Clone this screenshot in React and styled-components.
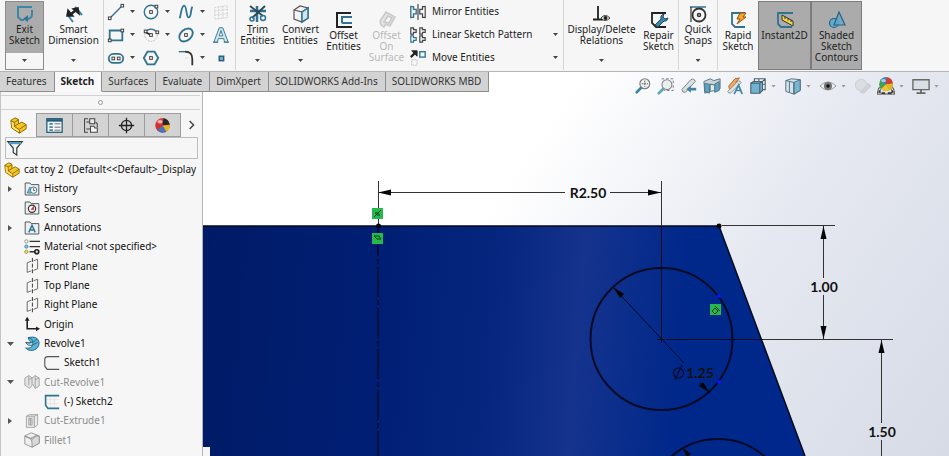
import React from 'react';
import styled, { createGlobalStyle, css } from 'styled-components';

const GlobalStyle = createGlobalStyle`
  * {
    box-sizing: border-box;
  }
  body {
    margin: 0;
    overflow: hidden;
  }
  button, input {
    font: inherit;
    color: inherit;
    border: 0;
    padding: 0;
    margin: 0;
    background: none;
  }
`;

const Page = styled.div`
  height: 100vh;
  display: flex;
  flex-direction: column;
  font-family: 'Noto Sans', sans-serif;
  font-size: 10px;
  line-height: 11px;
  color: #222222;
  background: #ffffff;
  overflow: hidden;
`;

const Ribbon = styled.header`
  display: flex;
  flex: none;
  height: 72px;
  padding: 0 5px 1px;
  background: #f6f6f6;
  border-bottom: 1px solid #b4b4b4;
`;

const Divider = styled.span`
  flex: none;
  width: 1px;
  background: #d6d6d6;
`;

const Command = styled.button`
  flex: none;
  display: flex;
  flex-direction: column;
  align-items: center;
  width: ${({ $width }) => $width}px;
  margin-top: 1px;
  padding: ${({ $low }) => ($low ? 9 : 3)}px 0 8px;
  white-space: nowrap;
  color: ${({ disabled }) => (disabled ? '#b9b9b9' : '#222222')};

  ${({ $pressed }) => $pressed && css`
    background: #ababab;
    border: 1px solid #7c7c7c;
    padding-top: 8px;
  `}

  ${({ $split }) => $split && css`
    background: linear-gradient(#ababab 51px, #f6f6f6 51px);
    border: 1px solid #8c8c8c;
    padding: 2px 0 7px;
  `}
`;

const CommandLabel = styled.span`
  text-align: center;
  white-space: pre-line;
`;

const Svg = styled.svg`
  flex: none;
  display: block;
  width: ${({ $size }) => $size || 20}px;
  height: ${({ $size }) => $size || 20}px;
  fill: none;
  stroke: #2f7391;
  stroke-width: 1.5;
`;

const Caret = styled.span`
  flex: none;
  width: 5px;
  height: 3px;
  background: ${({ $color }) => $color || '#444444'};
  clip-path: polygon(0 0, 100% 0, 50% 100%);
`;

const CommandCaret = styled(Caret)`
  margin-top: auto;
`;

const SketchTools = styled.div`
  flex: none;
  display: grid;
  grid-template-columns: repeat(3, 35px) 23px;
  grid-auto-rows: 23px;
  padding-left: 3px;
`;

const SmallTool = styled.button`
  display: flex;
  align-items: center;
  gap: 5px;
`;

const CommandList = styled.div`
  flex: none;
  display: grid;
  grid-auto-rows: 23px;
  width: 155px;
  padding: 0 5px 0 1px;
`;

const ListCommand = styled.button`
  display: flex;
  align-items: center;
  gap: 5px;
  text-align: left;
  white-space: nowrap;
`;

const ListLabel = styled.span`
  flex: 1;
`;

const TabRow = styled.div`
  position: relative;
  z-index: 1;
  flex: none;
  display: flex;
  height: 20px;
`;

const Tab = styled.button`
  height: 20px;
  padding: 0 7px 0 6px;
  white-space: nowrap;
  color: ${({ $active }) => ($active ? '#222222' : '#333333')};
  font-weight: ${({ $active }) => ($active ? 700 : 400)};
  background: ${({ $active }) => ($active ? '#f8f8f8' : '#d3d3d3')};
  border-right: 1px solid #8e8e8e;
  border-bottom: 1px solid ${({ $active }) => ($active ? '#f8f8f8' : '#8e8e8e')};
`;

const ViewTools = styled.div`
  position: absolute;
  top: 5px;
  right: 7px;
  display: flex;
  gap: 5px;
`;

const ViewTool = styled.button`
  display: flex;
  align-items: center;
  gap: 4px;
  width: ${({ $menu }) => ($menu ? 30 : 18)}px;
  opacity: ${({ disabled }) => (disabled ? 0.35 : 1)};
`;

const Workspace = styled.main`
  flex: 1;
  min-height: 0;
  display: flex;
  margin-top: -20px;
  background: linear-gradient(125deg, #ffffff 48%, #e6e9f1 72%, #d6dbe6 100%);
`;

const Panel = styled.aside`
  flex: none;
  width: 203px;
  margin-top: 20px;
  background: #f6f6f6;
  border-left: 1px solid #c4c4c4;
  border-right: 1px solid #b4b4b4;
  overflow: hidden;
`;

const Splitter = styled.div`
  display: flex;
  align-items: center;
  justify-content: center;
  height: 15px;
  margin: 3px 2px 3px 0;
  border: solid #d2d2d2;
  border-width: 1px 0;
`;

const SplitterDot = styled.span`
  width: 5px;
  height: 5px;
  border: 1px solid #999999;
  border-radius: 50%;
`;

const PanelTabs = styled.div`
  display: flex;
  height: 24px;
`;

const PanelTab = styled.button`
  display: flex;
  align-items: center;
  justify-content: center;
  width: 36px;
  background: ${({ $active }) => ($active ? '#f6f6f6' : '#d3d3d3')};
  border: solid #9c9c9c;
  border-width: ${({ $active }) => ($active ? '0 1px 0 0' : '1px 1px 1px 0')};
`;

const MoreTabs = styled.button`
  flex: 1;
  display: flex;
  align-items: center;
  justify-content: center;
`;

const Filter = styled.label`
  display: flex;
  align-items: center;
  height: 22px;
  margin: 0 4px;
  border: 1px solid #bdbdbd;
`;

const FilterInput = styled.input`
  flex: 1;
  min-width: 0;
  outline: none;
`;

const Tree = styled.ul`
  display: grid;
  grid-auto-rows: 19px 19px 20px;
  margin: 0;
  padding: 1px 0 0 2px;
  list-style: none;
`;

const TreeRow = styled.li`
  display: flex;
  align-items: center;
  gap: 4px;
  padding-left: ${({ $level }) => [1, 3, 41][$level]}px;
  white-space: pre;
  color: ${({ $muted }) => ($muted ? '#8d8d8d' : '#111111')};
`;

const Toggle = styled.button`
  flex: none;
  display: flex;
  width: 14px;

  svg {
    width: 8px;
    height: 8px;
  }
`;

const ToggleSpace = styled.span`
  flex: none;
  width: 14px;
`;

const Viewport = styled.section`
  flex: 1;
  min-width: 0;
  overflow: hidden;
`;

const Drawing = styled.svg`
  display: block;
  width: 100%;
  height: 100%;
`;

const DimensionText = styled.text`
  font-family: Lato, sans-serif;
  font-size: 14px;
  font-weight: 700;
  fill: #111111;
  text-anchor: middle;
`;

/* small square handle used on the sketch entity icons */
const Handle = ({ x, y }) => (
  <rect x={x - 1.5} y={y - 1.5} width="3" height="3" fill="#f6f6f6" stroke="#333" strokeWidth="1" />
);

const PartShape = () => (
  <g stroke="#7d5c00" strokeWidth="1" strokeLinejoin="round">
    <path d="M1 4l5-3 4 2v5l4-2 5 3v5l-8 5-9-6z" fill="#f3c51d" />
    <path d="M1 4l4 2.500L10 3M5 6.500V11l6 4v4M5 11l5-3M11 14.500L19 9" />
    <path d="M2 5.500l2.500 1.500v4.500l6 4v2L2.500 12.500z" fill="#ffe070" stroke="none" />
  </g>
);

/* slices run clockwise from the left */
const BallShape = ({ colors }) => (
  <g stroke="none">
    <circle cx="10" cy="10" r="8.500" fill={colors[0]} />
    <path d="M10 10L3 5q3-4 8-3.500z" fill={colors[1]} />
    <path d="M10 10l1-8.500Q17 2 18.500 9z" fill={colors[2]} />
    <path d="M10 10l8.500-1q0 6-4 8.500z" fill={colors[3]} />
    <path d="M10 10l4.500 7.500Q8 20 4 16z" fill={colors[4]} />
    <ellipse cx="7" cy="5.500" rx="3" ry="2" fill="#fff" opacity="0.6" />
  </g>
);

const FolderShape = () => (
  <path d="M1.500 17.500v-15h6l1.500 2h9.500v13z" fill="#eceff1" stroke="#555" strokeWidth="1.200" />
);

const PlaneShape = () => (
  <g stroke="#666" strokeWidth="1.200">
    <path d="M9 4L4 6v12l5-2M12 3.500l5-2v12l-5 2" />
    <path d="M10.500 0v20" stroke="#333" strokeDasharray="5 2" />
  </g>
);

const icons = {
  exit: (
    <>
      <path d="M17 3H3v10l3 3h3" stroke="#3b87ac" strokeWidth="2" />
      <path d="M17 6v4q0 5-6 5" stroke="#3b87ac" strokeWidth="2" />
      <path d="M8 15l5-4v7z" fill="#2f7391" stroke="none" />
    </>
  ),
  smartDimension: (
    <>
      <path d="M3 10l6 8M11 3l7 8" stroke="#3b87ac" strokeWidth="2" />
      <path d="M6 11l6-5" stroke="#222" strokeWidth="2.500" />
      <path d="M3 12l1-6 5 6zM14 4l1 6-6-5z" fill="#222" stroke="#222" />
    </>
  ),
  line: (<><path d="M4 16L16 4" /><Handle x={3} y={17} /><Handle x={17} y={3} /></>),
  circle: (<><circle cx="10" cy="10" r="7.500" /><Handle x={10} y={10} /><Handle x={16} y={4} /></>),
  spline: <path d="M3 17C5 10 5 3 8 3s2 13 5 13 2-8 4-12" strokeWidth="2" />,
  grid: (
    <path d="M3 5l14-2v13L3 18zM7.500 4v14M12 4v13M3 9l14-2M3 13.500L17 12" stroke="#cfcfcf" strokeWidth="1" strokeDasharray="2 1" />
  ),
  rectangle: (<><path d="M3 5h14v11H3z" strokeWidth="2" /><Handle x={3} y={16} /><Handle x={17} y={5} /></>),
  arc: (
    <>
      <circle cx="10" cy="10" r="7" stroke="#bbb" strokeWidth="1" strokeDasharray="2 1" />
      <path d="M3 7q7-7 14 0" /><path d="M4 7l6 3" stroke="#222" strokeWidth="2" />
      <Handle x={4} y={6} /><Handle x={10} y={10} /><Handle x={17} y={7} />
    </>
  ),
  ellipse: (<><ellipse cx="10" cy="10" rx="8.500" ry="6" transform="rotate(-42 10 10)" strokeWidth="2" /><Handle x={10} y={10} /></>),
  letter: <path d="M2 18l6-16h4l6 16h-4l-1-4H7l-1 4zM8 11h4l-2-6zM1 18h6M13 18h6" strokeWidth="1" fill="#d3e3eb" fillRule="evenodd" />,
  slot: (<><rect x="2" y="5.500" width="16" height="10" rx="5" strokeWidth="2" /><Handle x={7} y={10.500} /><Handle x={13} y={10.500} /></>),
  polygon: (<><path d="M6 3h8l4 7-4 7H6l-4-7z" strokeWidth="2" /><Handle x={10} y={10} /></>),
  fillet: (<><path d="M2 3h9" /><path d="M9 3q8 0 8 8v7" stroke="#333" strokeWidth="2" /><path d="M9 10h3" stroke="#ddd" /></>),
  point: <rect x="8" y="8" width="5" height="5" fill="#6aaed0" stroke="#245c77" />,
  trim: (
    <>
      <path d="M2 7h16M9 2v16" strokeWidth="2.500" />
      <path d="M2 2l13 10M17 2L4 14" stroke="#2d4650" strokeWidth="1.800" />
      <circle cx="4" cy="15" r="2" /><circle cx="15" cy="14" r="2.500" />
    </>
  ),
  convert: (
    <g stroke="#555" strokeWidth="1.200">
      <path d="M3 6l6-4 8 2v10l-6 4-8-3z" fill="#f4f4f4" />
      <path d="M3 6l8 2v10M11 8l6-4" /><path d="M11 8l6-4v10l-6 4z" fill="#d2e4ee" stroke="#2f7391" strokeWidth="1.500" />
    </g>
  ),
  offset: (<><path d="M17 3H3v14h15" stroke="#222" strokeWidth="2" /><path d="M18 7H8v5q0 1 2 1h8" strokeWidth="2" /></>),
  offsetSurface: (
    <g stroke="#c9c9c9">
      <path d="M3 11L9 2l9 5-5 9-4-2-2 3-3-2z" fill="#e3e3e3" />
      <path d="M7 12l4-6 4 2-3 5z" fill="#f5f5f5" />
    </g>
  ),
  mirror: (
    <>
      <path d="M2 3v14M2 4h3v3h3v5H5v4H2" />
      <path d="M18 3v14M18 4h-3v3h-3v5h3v4h3M10 1v18" stroke="#444" strokeWidth="1.300" />
    </>
  ),
  pattern: (
    <g strokeWidth="1.300">
      <path d="M2 2h3v2h3v3H5v2H2z" stroke="#444" /><path d="M12 2h3v2h3v3h-3v2h-3z" stroke="#444" />
      <path d="M2 11h3v2h3v3H5v2H2z" /><path d="M12 11h3v2h3v3h-3v2h-3z" stroke="#444" />
    </g>
  ),
  move: (
    <>
      <path d="M2 9l6-6" stroke="#222" strokeWidth="2.500" /><path d="M3 2h6v6z" fill="#222" stroke="#222" strokeWidth="1" />
      <rect x="12" y="3" width="6" height="6" /><rect x="3" y="12" width="6" height="6" stroke="#bbb" strokeWidth="1" strokeDasharray="2 1" />
    </>
  ),
  relations: (
    <>
      <path d="M6 2v13M1 15.500h10" stroke="#222" strokeWidth="1.800" />
      <path d="M9 14q4-5 9 0-5 5-9 0z" fill="#fff" stroke="#333" strokeWidth="1" />
      <circle cx="13.500" cy="14" r="2" fill="#222" stroke="none" />
    </>
  ),
  repair: (
    <>
      <path d="M17 3H3v10l4 4h10" stroke="#222" strokeWidth="1.800" />
      <path d="M6 15l6-6q-1-4 3-5l-1 3 2 2 3-1q-1 4-4 3l-6 6z" fill="#3b87ac" stroke="#1f4e65" strokeWidth="1" />
    </>
  ),
  snaps: (
    <g stroke="#333">
      <path d="M2 3h16" stroke="#2f7391" /><path d="M3 3v15" strokeWidth="1.200" />
      <circle cx="11" cy="11" r="6.500" strokeWidth="1.800" /><circle cx="11" cy="11" r="1.500" />
    </g>
  ),
  rapid: (
    <>
      <path d="M17 3H4v11l3 3h10" strokeWidth="1.800" />
      <path d="M12 3h6l-3 4h3l-9 7 3-5H9z" fill="#f5a623" stroke="#9c4b09" strokeWidth="1" />
    </>
  ),
  instant: (
    <>
      <path d="M18 3H3v11l3 3h11" strokeWidth="1.800" />
      <path d="M7 5l11 6v5L7 10z" fill="#f1d34a" stroke="#333" strokeWidth="1" /><path d="M10 7v2M13 8.500v2M16 10v2" stroke="#333" strokeWidth="1" />
    </>
  ),
  contours: (
    <g fill="#62a9d0" stroke="#28617f" strokeWidth="1.200">
      <circle cx="7" cy="13" r="4.500" /><path d="M12 2l6 13H7z" fillOpacity="0.8" />
    </g>
  ),
  zoomFit: (
    <>
      <path d="M3 17l5-5" stroke="#3989a5" strokeWidth="3" strokeLinecap="round" />
      <circle cx="12" cy="7.500" r="5.500" fill="#eef1f3" stroke="#777" strokeWidth="1.200" />
      <path d="M12 4v7M8.500 7.500h7" stroke="#555" strokeWidth="1" strokeDasharray="2 1" />
    </>
  ),
  zoomArea: (
    <>
      <path d="M5 2h13v13H8" stroke="#777" strokeWidth="1" strokeDasharray="3 2" />
      <path d="M2 18l5-5" stroke="#60a5ba" strokeWidth="3" strokeLinecap="round" />
      <circle cx="11" cy="8.500" r="5.500" fill="#e9eef1" stroke="#888" strokeWidth="1.200" />
    </>
  ),
  previousView: (
    <>
      <path d="M2 14L12 3q4-2 5 2L6 17q-3 1-4-3z" fill="#dadfe2" stroke="#777" strokeWidth="1" />
      <path d="M18 13.500h-7" stroke="#3f86a5" strokeWidth="3" /><path d="M7 13.500l5-4v8z" fill="#3f86a5" stroke="none" />
    </>
  ),
  section: (
    <g strokeWidth="1" stroke="#4b7385">
      <path d="M1 5l7-3 4 2 7-2v11l-6 3V9l-5-1v8l-6 2z" fill="#ccd3d6" />
      <path d="M2 7l5 1v10l-5-2zM13 8l5-3v10l-5 2z" fill="#5fa4c2" /><path d="M8 8l5 1v6l-5 1z" fill="#e6eaec" />
    </g>
  ),
  dynamic: (
    <g strokeWidth="1">
      <path d="M3 10l7-8 5-1-4 5 4 1L4 14z" fill="#f2a65a" stroke="#a5672b" />
      <path d="M2 16L14 4l3 2L5 18q-3 0-3-2z" fill="#dfe4e7" stroke="#888" />
      <path d="M9 19l5-10 4 10M11 15h6" stroke="#3f86a5" strokeWidth="1.800" />
    </g>
  ),
  orientation: (
    <g strokeWidth="1.200" stroke="#46626e">
      <path d="M6 5V2h12v12h-3M18 2l-4 4M18 8h-4M11 2v4" />
      <path d="M2 7l3-2h10v10l-3 3H2z" fill="#72b1cf" /><path d="M2 7h10v11M12 7l3-2" />
    </g>
  ),
  display: (
    <g strokeWidth="1" stroke="#4b6b7a">
      <path d="M2 4l6-2 10 1v12l-7 4-9-3z" fill="#d5e4ea" /><path d="M11 6l7-3v12l-7 4z" fill="#78b7d3" /><path d="M2 4l9 2v13M6 5v12" />
    </g>
  ),
  eye: (
    <>
      <path d="M1 10q9-9 18 0-9 9-18 0z" fill="#eee" stroke="#999" strokeWidth="1" />
      <circle cx="10" cy="10" r="4.500" fill="#777" stroke="none" /><circle cx="10" cy="10" r="2" fill="#111" stroke="none" />
    </>
  ),
  appearance: (
    <g stroke="#999" strokeWidth="1"><circle cx="8" cy="9" r="6.500" fill="#c8c8c8" /><path d="M7 17l9-10 3 3-8 8z" fill="#aaa" /></g>
  ),
  scene: (
    <>
      <path d="M2 12h16l2 7H0z" fill="#e4e4e4" stroke="#444" strokeWidth="1" />
      <path d="M1 17l3-4v5zM19 17l-3-4v5zM5 17h4v2H5zM12 17h4v2h-4z" fill="#333" stroke="none" />
      <g transform="translate(1 -1) scale(0.9)">
        <BallShape colors={['#3da552', '#3d79c9', '#d93a32', '#e8b51d', '#f0c533']} />
      </g>
    </>
  ),
  monitor: (
    <g stroke="#686868"><path d="M1 3h18v11H1z" fill="#d9dfe4" /><path d="M10 14v3M5 18h10" strokeWidth="2" /></g>
  ),
  part: <PartShape />,
  properties: (
    <g stroke="#245c77">
      <rect x="1" y="2" width="18" height="16" fill="#f3f6f7" /><path d="M1 4h18" strokeWidth="3" />
      <path d="M4 8h4M4 12h4M4 15.500h4" strokeWidth="2" stroke="#3b87ac" /><path d="M10 8h7M10 12h7M10 15.500h7" stroke="#555" strokeWidth="1" />
    </g>
  ),
  configuration: (
    <g stroke="#444" strokeWidth="1.200">
      <path d="M7 2H3v16h4M5 6h5M5 14h6" /><path d="M9 2h6v6H9z" fill="#e7e7e7" />
      <path d="M10 11h4l1 2h3v5h-8z" fill="#f5f5f5" /><path d="M16 6l2 2v4" />
    </g>
  ),
  target: (<g stroke="#222"><circle cx="10" cy="10" r="6" /><path d="M10 1v18M1 10h18" /></g>),
  ball: <BallShape colors={['#d3302f', '#d8423a', '#26282e', '#e8b51d', '#4275c2']} />,
  more: <path d="M7 5l5 5-5 5" stroke="#444" strokeWidth="1.800" />,
  funnel: (
    <>
      <path d="M2 3h16l-6 7v8l-4-3v-5z" fill="#edf4f7" stroke="#333" strokeWidth="1.300" />
      <path d="M3 4.500h14" stroke="#4f9dbd" strokeWidth="2.500" />
    </>
  ),
  history: (<><FolderShape /><path d="M4 15l3-7 4 2-2 5z" fill="#7fb9d3" strokeWidth="1" /><circle cx="12" cy="11.500" r="4" fill="#fff" strokeWidth="1.200" /><path d="M12 9v3h2" stroke="#333" strokeWidth="1" /></>),
  sensors: (<><FolderShape /><circle cx="10" cy="11" r="4.500" fill="#fff" stroke="#333" /><path d="M9 12l3-4v4z" fill="#d33" stroke="#b33" strokeWidth="1" /></>),
  annotations: (<><FolderShape /><path d="M6 15.500l4-9 4 9M7.500 12.500h5" strokeWidth="1.800" /></>),
  material: (
    <>
      <path d="M7 3h13M7 9.500h13M7 16h8" stroke="#333" strokeWidth="1.800" />
      <g strokeWidth="1"><circle cx="3" cy="3" r="2" fill="#fff" stroke="#777" /><circle cx="3" cy="9.500" r="2" fill="#8ac5ee" /><circle cx="3" cy="16" r="2" fill="#f6ea55" stroke="#888022" /></g>
      <circle cx="16" cy="16" r="2.500" fill="#ddd" stroke="#222" strokeWidth="2" />
    </>
  ),
  plane: <PlaneShape />,
  origin: (<g stroke="#222"><path d="M4 3v13h13" strokeWidth="2" /><path d="M1 6l3-5 3 5zM15 13l5 3-5 3z" fill="#222" stroke="none" /></g>),
  revolve: (
    <g stroke="#1f5873" strokeWidth="1">
      <path d="M5 2q12-3 14 6 0 8-8 10-6 1-9-3 7 1 9-4-6 2-8-3 4 1 6 0-3-2-4-6z" fill="#55b3d9" />
      <path d="M5 2q6 1 6 6l5-4M11 11l6-3" /><path d="M2 8q4 2 9 0v3q-6 2-9-3z" fill="#d4eef8" />
    </g>
  ),
  sketch: <path d="M19 2H5Q1 2 1 5v9l3 4h15" stroke="#555" strokeWidth="1.400" />,
  sketchOpen: (<><path d="M8 4v12M13 4v12M4 7h14M4 12h14" stroke="#e2e2e2" strokeWidth="1" /><path d="M19 2H2v12l3 4h14" strokeWidth="2" /></>),
  cutRevolve: (
    <g stroke="#999" strokeWidth="1"><path d="M1 5l5-3 4 3 4-3 5 3v10l-5 3-3-5-4 5-6-4z" fill="#e2e2e2" /><path d="M6 2v12M10 5v8M14 2v16M6 7l4-2M14 7l5-2" /></g>
  ),
  cutExtrude: (
    <g stroke="#999" strokeWidth="1"><path d="M3 4l4-2h10v13l-4 3H3z" fill="#ececec" /><path d="M3 4h10v14M13 4l4-2M6 7h4v8H6zM8 7v8" fill="#ddd" /></g>
  ),
  filletFeature: (
    <g stroke="#888" strokeWidth="1"><path d="M1 5l8-4 10 4v9l-9 5-9-4z" fill="#eee" /><path d="M1 5l6 3q3 1 3 5v6l9-5V5q-6-1-8 4z" fill="#d9d9d9" /><path d="M8 8l9-4" /></g>
  ),
};

const Icon = ({ name, size }) => (
  <Svg viewBox="0 0 20 20" $size={size} aria-hidden="true">{icons[name]}</Svg>
);

const CommandButton = ({ icon, label, menu, ...rest }) => (
  <Command {...rest}>
    <Icon name={icon} />
    <CommandLabel>{label}</CommandLabel>
    {menu && <CommandCaret />}
  </Command>
);

const sketchTools = [
  ['line', true], ['circle', true], ['spline', true], ['grid', false],
  ['rectangle', true], ['arc', true], ['ellipse', true], ['letter', false],
  ['slot', true], ['polygon', false], ['fillet', true], ['point', false],
];

const listCommands = [
  { icon: 'mirror', label: 'Mirror Entities' },
  { icon: 'pattern', label: 'Linear Sketch Pattern', menu: true },
  { icon: 'move', label: 'Move Entities', menu: true },
];

const tabs = ['Features', 'Sketch', 'Surfaces', 'Evaluate', 'DimXpert', 'SOLIDWORKS Add-Ins', 'SOLIDWORKS MBD'];

const viewTools = [
  { icon: 'zoomFit' },
  { icon: 'zoomArea' },
  { icon: 'previousView' },
  { icon: 'section' },
  { icon: 'dynamic' },
  { icon: 'orientation', menu: true },
  { icon: 'display', menu: true },
  { icon: 'eye', menu: true },
  { icon: 'appearance', disabled: true },
  { icon: 'scene', menu: true },
  { icon: 'monitor', menu: true },
];

const panelTabs = ['part', 'properties', 'configuration', 'target', 'ball'];

const treeItems = [
  { icon: 'part', label: 'cat toy 2  (Default<<Default>_Display', level: 0 },
  { icon: 'history', label: 'History', level: 1, toggle: 'closed' },
  { icon: 'sensors', label: 'Sensors', level: 1 },
  { icon: 'annotations', label: 'Annotations', level: 1, toggle: 'closed' },
  { icon: 'material', label: 'Material <not specified>', level: 1 },
  { icon: 'plane', label: 'Front Plane', level: 1 },
  { icon: 'plane', label: 'Top Plane', level: 1 },
  { icon: 'plane', label: 'Right Plane', level: 1 },
  { icon: 'origin', label: 'Origin', level: 1 },
  { icon: 'revolve', label: 'Revolve1', level: 1, toggle: 'open' },
  { icon: 'sketch', label: 'Sketch1', level: 2 },
  { icon: 'cutRevolve', label: 'Cut-Revolve1', level: 1, toggle: 'open', muted: true },
  { icon: 'sketchOpen', label: '(-) Sketch2', level: 2 },
  { icon: 'cutExtrude', label: 'Cut-Extrude1', level: 1, toggle: 'closed', muted: true },
  { icon: 'filletFeature', label: 'Fillet1', level: 1, muted: true },
];

const TreeItem = ({ icon, label, level, toggle, muted }) => (
  <TreeRow $level={level} $muted={muted}>
    {level === 1 && (toggle ? (
      <Toggle aria-label={`Toggle ${label}`}>
        <svg viewBox="0 0 8 8" fill="#555">
          <path d={toggle === 'open' ? 'M1 2h7L4.500 6z' : 'M2 1v6l4-3z'} />
        </svg>
      </Toggle>
    ) : <ToggleSpace />)}
    <Icon name={icon} size={16} />
    <span>{label}</span>
  </TreeRow>
);

const Relation = ({ x, y, children }) => (
  <g transform={`translate(${x} ${y})`} stroke="#0b3d17" fill="none">
    <rect width="11" height="11" fill="#25b84c" stroke="none" />
    {children}
  </g>
);

const ModelView = () => (
  <Drawing viewBox="203 72 746 384" preserveAspectRatio="xMinYMin slice">
    <defs>
      <linearGradient id="face" gradientUnits="userSpaceOnUse" x1="203" y1="240" x2="805" y2="290">
        <stop offset="0" stopColor="#001b66" />
        <stop offset="0.3" stopColor="#001e74" />
        <stop offset="0.5" stopColor="#06267f" />
        <stop offset="0.63" stopColor="#15338d" />
        <stop offset="0.8" stopColor="#00288a" />
        <stop offset="1" stopColor="#00288c" />
      </linearGradient>
    </defs>
    <path d="M203 226H719L805 456H210V447H203z" fill="url(#face)" />
    <path d="M203 447h7v9h-7z" fill="#f6f6f6" />
    <path d="M203 226H719L805 456" fill="none" stroke="#050a1e" strokeWidth="1.500" />
    <path d="M378 226V456" stroke="#030a2c" strokeWidth="1.500" strokeDasharray="30 3 5 3" />
    <g fill="none" stroke="#030a24" strokeWidth="2">
      <circle cx="661.500" cy="339" r="71" />
      <circle cx="718" cy="510" r="71" />
    </g>
    <g stroke="#333333" strokeWidth="1">
      <path d="M378.500 181V226M661.500 181V226M378 192.500H565M610 192.500H661" />
      <path d="M722 225.500H835M823.500 226V278M823.500 295V339" />
      <path d="M763 339.500H893M881.500 340V423M881.500 440V456" />
    </g>
    <g stroke="#030a24" strokeWidth="1">
      <path d="M661.500 226V336M666 339.500H763M657 339.500h8M661.500 335v8" />
      <path d="M613 287L684 363M700 383L709 392" />
    </g>
    <g fill="#050505">
      <path d="M378 192.500l13-3v6zM661 192.500l-13-3v6z" />
      <path d="M823.500 226l-3 13h6zM823.500 339l-3-13h6zM881.500 340l-3 13h6z" />
      <path d="M613 287l11 7-4 4zM710 393l-11-7 4-4zM682 447l9 7-4 3z" />
      <circle cx="378.500" cy="226" r="2.500" />
      <circle cx="719" cy="226" r="2.500" />
    </g>
    <g fill="#0a12ff">
      <circle cx="719" cy="296" r="2" />
      <circle cx="719" cy="382" r="2" />
    </g>
    <Relation x={372} y={208}><path d="M2 9l7-7M3 5h4M5 7h3" /></Relation>
    <Relation x={372} y={233}><path d="M2 3h5l2 3H5z" /></Relation>
    <Relation x={710} y={304}><path d="M2 7l3-3 3 3-3 3zM5 2l5 5" /></Relation>
    <DimensionText x="588" y="198">R2.50</DimensionText>
    <DimensionText x="824" y="292">1.00</DimensionText>
    <DimensionText x="882" y="437">1.50</DimensionText>
    <DimensionText x="700" y="378">1.25</DimensionText>
    <g fill="none" stroke="#050b20" strokeWidth="1.200">
      <circle cx="678.500" cy="373" r="5" />
      <path d="M675 380l7-15" />
    </g>
  </Drawing>
);

const App = () => (
  <Page>
    <GlobalStyle />
    <Ribbon>
      <CommandButton icon="exit" label={'Exit\nSketch'} $width={39} $split menu />
      <CommandButton icon="smartDimension" label={'Smart\nDimension'} $width={59} menu />
      <Divider />
      <SketchTools>
        {sketchTools.map(([name, menu]) => (
          <SmallTool key={name} aria-label={name}>
            <Icon name={name} size={18} />
            {menu && <Caret />}
          </SmallTool>
        ))}
      </SketchTools>
      <Divider />
      <CommandButton icon="trim" label={<><u>T</u>rim{'\n'}Entities</>} $width={43} menu />
      <CommandButton icon="convert" label={'Convert\nEntities'} $width={43} menu />
      <CommandButton icon="offset" label={'Offset\nEntities'} $width={43} $low />
      <CommandButton icon="offsetSurface" label={'Offset\nOn\nSurface'} $width={43} $low disabled />
      <CommandList>
        {listCommands.map(({ icon, label, menu }) => (
          <ListCommand key={icon}>
            <Icon name={icon} size={18} />
            <ListLabel>{label}</ListLabel>
            {menu && <Caret />}
          </ListCommand>
        ))}
      </CommandList>
      <Divider />
      <CommandButton icon="relations" label={'Display/Delete\nRelations'} $width={75} menu />
      <CommandButton icon="repair" label={'Repair\nSketch'} $width={39} $low />
      <Divider />
      <CommandButton icon="snaps" label={'Quick\nSnaps'} $width={38} menu />
      <Divider />
      <CommandButton icon="rapid" label={'Rapid\nSketch'} $width={40} $low />
      <CommandButton icon="instant" label="Instant2D" $width={53} $pressed aria-pressed="true" />
      <CommandButton icon="contours" label={'Shaded\nSketch\nContours'} $width={51} $pressed aria-pressed="true" />
    </Ribbon>

    <TabRow>
      {tabs.map((tab) => (
        <Tab key={tab} $active={tab === 'Sketch'}>{tab}</Tab>
      ))}
      <ViewTools>
        {viewTools.map(({ icon, menu, disabled }) => (
          <ViewTool key={icon} $menu={menu} disabled={disabled} aria-label={icon}>
            <Icon name={icon} size={18} />
            {menu && <Caret $color="#999999" />}
          </ViewTool>
        ))}
      </ViewTools>
    </TabRow>

    <Workspace>
      <Panel>
        <Splitter><SplitterDot /></Splitter>
        <PanelTabs>
          {panelTabs.map((name) => (
            <PanelTab key={name} $active={name === 'part'} aria-label={name}>
              <Icon name={name} size={17} />
            </PanelTab>
          ))}
          <MoreTabs aria-label="More"><Icon name="more" size={16} /></MoreTabs>
        </PanelTabs>
        <Filter>
          <Icon name="funnel" size={18} />
          <FilterInput aria-label="Filter" />
        </Filter>
        <Tree>
          {treeItems.map((item) => (
            <TreeItem key={item.label} {...item} />
          ))}
        </Tree>
      </Panel>
      <Viewport>
        <ModelView />
      </Viewport>
    </Workspace>
  </Page>
);

export default App;
